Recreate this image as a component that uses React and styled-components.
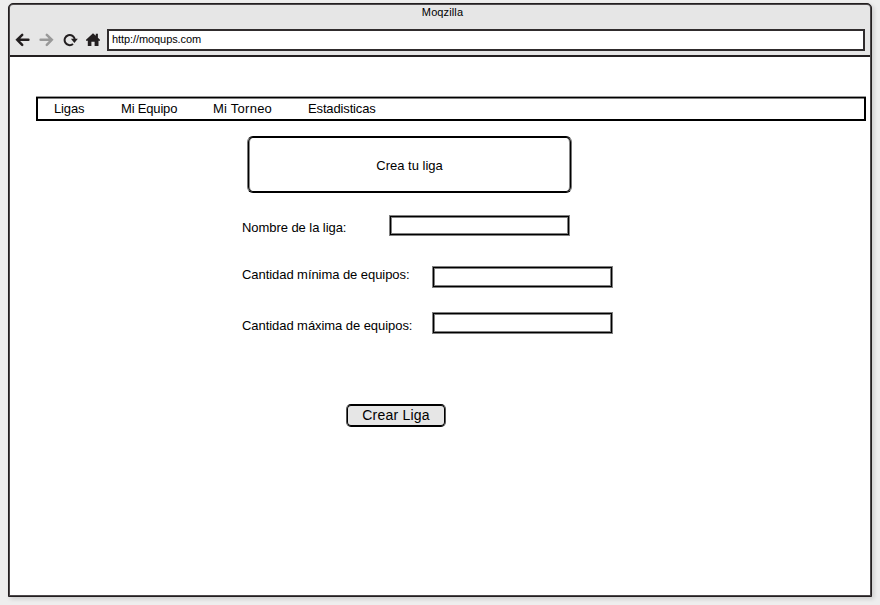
import React from "react";
import styled, { createGlobalStyle } from "styled-components";

const GlobalStyle = createGlobalStyle`
  * { box-sizing: border-box; }
  body {
    margin: 0;
    background: #eeeeee;
    font-family: "Liberation Sans", Arial, sans-serif;
    color: #000;
  }
`;

const Page = styled.div`
  height: 605px;
  padding: 3px 8px 8px;
  overflow: hidden;
`;

const BrowserWindow = styled.div`
  width: 864px;
  height: 594px;
  display: flex;
  flex-direction: column;
  padding: 1px;
  border: 1px solid #231f20;
  border-radius: 5px 5px 0 0;
  background: #4d494b;
  box-shadow: 2px 2px 4px rgba(0, 0, 0, 0.14);
`;

const Chrome = styled.header`
  height: 52px;
  flex: none;
  background: #e6e6e6;
  border-bottom: 2px solid #231f20;
  border-radius: 3px 3px 0 0;
`;

const Title = styled.div`
  height: 24px;
  padding-left: 5px;
  font-size: 11px;
  line-height: 15px;
  text-align: center;
  letter-spacing: 0.12px;
`;

const Toolbar = styled.div`
  display: flex;
  align-items: center;
  height: 22px;
  padding-left: 5px;
`;

const ToolIcon = styled.svg`
  width: ${(p) => p.$width}px;
  height: 16px;
  margin-right: ${(p) => p.$gap}px;
  flex: none;
  color: ${(p) => (p.$muted ? "#999999" : "#231f20")};
  fill: none;
  stroke: currentColor;
`;

const AddressBar = styled.div`
  width: 758px;
  height: 22px;
  padding-left: 3px;
  border: 2px solid #302c2d;
  background: #fff;
  font-size: 11px;
  line-height: 17px;
  letter-spacing: -0.08px;
`;

const Content = styled.main`
  flex: 1;
  padding: 40px 0 0 26px;
  background: #fff;
`;

const Nav = styled.nav`
  display: flex;
  width: 830px;
  height: 24px;
  border: 2px solid #000;
  border-top-width: 1px;
  box-shadow: 0 -1px 0 rgba(0, 0, 0, 0.4), inset 0 1px 0 rgba(0, 0, 0, 0.5);
  padding: 1px 0 0 16px;
  font-size: 13px;
  line-height: 19px;
`;

const NavItem = styled.span`
  width: ${(p) => p.$width}px;
  letter-spacing: ${(p) => p.$spacing || 0}px;
  white-space: nowrap;
`;

const Banner = styled.h1`
  display: flex;
  align-items: center;
  justify-content: center;
  width: 325px;
  height: 57px;
  margin: 15px 0 0 211px;
  padding-top: 2px;
  border: 1px solid #000;
  border-left-color: #777;
  border-right-color: #777;
  border-radius: 6px;
  box-shadow: inset 0 0 0 1px #000, inset 2px 0 0 #888, inset -2px 0 0 #888;
  font-size: 13px;
  font-weight: 400;
`;

const Form = styled.form`
  padding-left: 206px;
`;

const Field = styled.div`
  display: flex;
  align-items: flex-start;
  height: 22px;
  margin-top: ${(p) => p.$top}px;
`;

const Label = styled.label`
  width: ${(p) => p.$width}px;
  padding-top: ${(p) => p.$drop}px;
  font-size: 13px;
  line-height: 16px;
  letter-spacing: -0.06px;
  white-space: nowrap;
`;

const Input = styled.input`
  width: 181px;
  height: ${(p) => p.$height}px;
  padding: 0 4px;
  border: 1px solid #808080;
  border-radius: 0;
  background: #fff;
  box-shadow: inset 0 0 0 1px #000, inset 0 0 0 2px #808080;
  outline: none;
`;

const SubmitButton = styled.button`
  display: block;
  width: 100px;
  height: 23px;
  margin: 70px 0 0 104px;
  padding: 0 0 2px;
  border: 1px solid #000;
  border-left-color: #555;
  border-right-color: #555;
  border-radius: 5px;
  background: #e6e6e6;
  box-shadow: inset 0 0 0 1px #000;
  color: #000;
  font: 14px/18px "Liberation Sans", Arial, sans-serif;
  letter-spacing: 0.2px;
`;

const NAV_ITEMS = [
  { label: "Ligas", width: 67, spacing: -0.15 },
  { label: "Mi Equipo", width: 92, spacing: -0.18 },
  { label: "Mi Torneo", width: 95, spacing: 0.25 },
  { label: "Estadisticas", width: 80, spacing: -0.14 },
];

const FIELDS = [
  { id: "nombre", label: "Nombre de la liga:", width: 147, top: 22, drop: 5, height: 21 },
  { id: "minimo", label: "Cantidad mínima de equipos:", width: 190, top: 29, drop: 1, height: 22 },
  { id: "maximo", label: "Cantidad máxima de equipos:", width: 190, top: 24, drop: 6, height: 22 },
];

const ARROW = "M13.4 7.8H2.2M7.2 2.8l-5 5 5 5";

export default function App() {
  return (
    <>
      <GlobalStyle />
      <Page>
        <BrowserWindow>
          <Chrome>
            <Title>Moqzilla</Title>
            <Toolbar>
              <ToolIcon viewBox="0 0 15 16" $width={15} $gap={9}>
                <path d={ARROW} strokeWidth="2.5" strokeLinecap="round" />
              </ToolIcon>
              <ToolIcon viewBox="0 0 15 16" $width={15} $gap={9} $muted>
                <path
                  d={ARROW}
                  strokeWidth="2.5"
                  strokeLinecap="round"
                  transform="matrix(-1 0 0 1 15 0)"
                />
              </ToolIcon>
              <ToolIcon viewBox="0 0 15 16" $width={15} $gap={8}>
                <path d="M10 12A5.1 5.1 0 1 1 11.8 7.6" strokeWidth="2" />
                <path d="M7.9 6.8h6.9l-3.4 4.2z" fill="currentColor" stroke="none" />
              </ToolIcon>
              <ToolIcon viewBox="0 0 14 16" $width={14} $gap={7}>
                <path
                  d="M7 1.2 9.8 3.8V1.8h2.1v4L14 7.8v.9h-1.5V14H8.6V9.8H5.4V14H1.8V8.7H0v-.9z"
                  fill="currentColor"
                  stroke="none"
                />
              </ToolIcon>
              <AddressBar>http://moqups.com</AddressBar>
            </Toolbar>
          </Chrome>
          <Content>
            <Nav>
              {NAV_ITEMS.map((item) => (
                <NavItem key={item.label} $width={item.width} $spacing={item.spacing}>
                  {item.label}
                </NavItem>
              ))}
            </Nav>
            <Banner>Crea tu liga</Banner>
            <Form>
              {FIELDS.map((f) => (
                <Field key={f.id} $top={f.top}>
                  <Label htmlFor={f.id} $width={f.width} $drop={f.drop}>
                    {f.label}
                  </Label>
                  <Input id={f.id} $height={f.height} />
                </Field>
              ))}
              <SubmitButton type="button">Crear Liga</SubmitButton>
            </Form>
          </Content>
        </BrowserWindow>
      </Page>
    </>
  );
}
